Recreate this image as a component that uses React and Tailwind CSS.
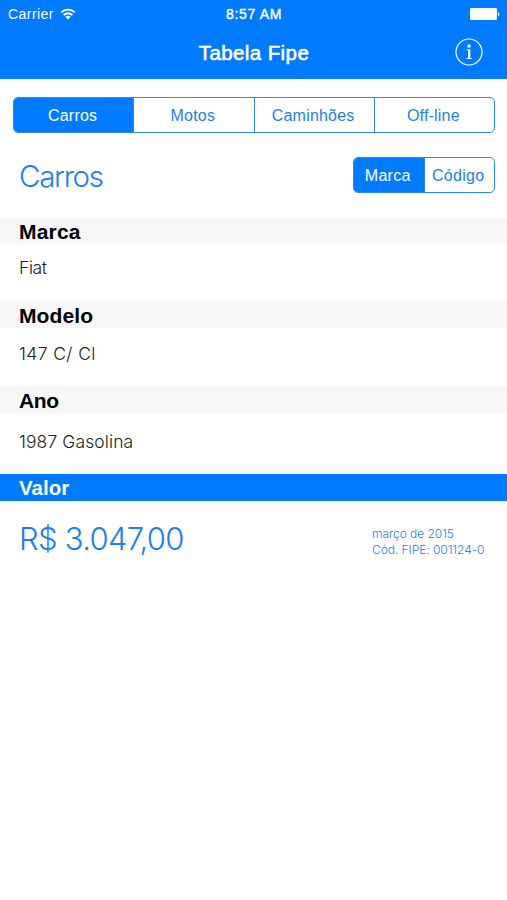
import React from 'react'

const categories = ['Carros', 'Motos', 'Caminhões', 'Off-line']

const fields = [
    {
        label: 'Marca',
        value: 'Fiat',
        band: 'h-[26px] pt-[2px] tracking-[0.2px]',
        row: 'h-14 pb-[7px] tracking-[-0.4px]',
    },
    {
        label: 'Modelo',
        value: '147 C/ Cl',
        band: 'h-7 pt-[3px] tracking-[0.1px]',
        row: 'h-[58px] pb-[6px] tracking-[0.4px]',
    },
    {
        label: 'Ano',
        value: '1987 Gasolina',
        band: 'h-[27px] pt-[2px] tracking-[-0.4px]',
        row: 'h-[61px] pb-[3px] tracking-[0.1px]',
    },
]

const WifiIcon = () => (
    <svg className="h-[12px] w-[16px]" viewBox="0 0 16 12" fill="none">
        <path
            d="M1.2 4.4C5 .7 11 .7 14.8 4.4M3.7 7.1c2.4-2.4 6.2-2.4 8.6 0"
            stroke="#fff"
            strokeWidth="1.9"
        />
        <path d="M5.3 8.8c1.5-1.4 3.9-1.4 5.4 0L8 11.5z" fill="#fff" />
    </svg>
)

const BatteryIcon = () => (
    <svg className="h-[12px] w-[30px]" viewBox="0 0 30 12" fill="#fff">
        <rect width="27" height="12" rx="1.2" />
        <path d="M28 4.2c1.9.5 1.9 3.1 0 3.6z" />
    </svg>
)

const InfoIcon = () => (
    <svg className="h-7 w-7" viewBox="0 0 28 28" fill="none">
        <circle cx="14" cy="14" r="13" stroke="#fff" strokeWidth="1.2" />
        <circle cx="14" cy="8" r="1.7" fill="#fff" />
        <path
            d="M11.6 11.3h3.7v8.8h1.5v1h-5.3v-1H13v-7.8h-1.4z"
            fill="#fff"
        />
    </svg>
)

const Segments = ({ items, active, className }) => (
    <div
        className={`flex h-9 overflow-hidden rounded-[5px] border border-[#2b87ee] text-[16px] ${className}`}
    >
        {items.map((item, i) => (
            <button
                key={item}
                className={`flex flex-1 items-center justify-center pt-[2px] pr-[2px] ${
                    i < items.length - 1 ? 'border-r border-[#2b87ee]' : ''
                } ${
                    item === active
                        ? 'bg-[#007aff] text-white'
                        : 'text-[#1b7fef]'
                }`}
            >
                {item}
            </button>
        ))}
    </div>
)

const App = () => {
    return (
        <div className="h-[900px] w-[507px] overflow-hidden bg-white font-['Liberation_Sans',Arial,sans-serif]">
            <header className="h-[79px] bg-[#007aff] text-white">
                <div className="grid h-7 grid-cols-3 items-center pr-[7px] pl-2 text-[14px]">
                    <div className="flex items-center gap-[6px] tracking-[0.45px]">
                        Carrier
                        <WifiIcon />
                    </div>
                    <div className="text-center tracking-[0.65px] [-webkit-text-stroke:0.4px_white]">
                        8:57 AM
                    </div>
                    <div className="flex justify-end">
                        <BatteryIcon />
                    </div>
                </div>
                <div className="grid h-12 grid-cols-[1fr_auto_1fr] items-center px-6">
                    <span />
                    <h1 className="pt-[3px] pl-px text-[20.5px] tracking-[0.4px] [-webkit-text-stroke:0.6px_white]">
                        Tabela Fipe
                    </h1>
                    <button className="justify-self-end">
                        <InfoIcon />
                    </button>
                </div>
            </header>

            <main>
                <Segments
                    items={categories}
                    active="Carros"
                    className="mt-[18px] mr-3 ml-[13px] tracking-[0.2px]"
                />

                <div className="mt-6 flex h-9 items-center justify-between pr-3 pl-[19px]">
                    <h2 className="pt-[2px] font-['Inter',sans-serif] text-[29.5px] font-light tracking-[-1.3px] text-[#1b7fef]">
                        Carros
                    </h2>
                    <Segments
                        items={['Marca', 'Código']}
                        active="Marca"
                        className="w-[142px] tracking-[0.3px]"
                    />
                </div>

                <div className="mt-[25px]">
                    {fields.map((field) => (
                        <section key={field.label}>
                            <h3
                                className={`flex items-center bg-[#f7f7f7] pl-[19px] text-[21px] font-bold text-black ${field.band}`}
                            >
                                {field.label}
                            </h3>
                            <p
                                className={`flex items-center pl-[19px] font-['Inter',sans-serif] text-[17.5px] font-light text-[#222] ${field.row}`}
                            >
                                {field.value}
                            </p>
                        </section>
                    ))}
                </div>

                <h3 className="flex h-[27px] items-center bg-[#007aff] pt-[2px] pl-[19px] text-[20.5px] font-bold text-white">
                    Valor
                </h3>
                <div className="flex h-[78px] items-center justify-between pl-[19px] font-['Inter',sans-serif] font-light text-[#1b7fef]">
                    <span className="pb-[2px] text-[31px] tracking-[-0.7px]">
                        R$ 3.047,00
                    </span>
                    <div className="w-[135px] pt-[3px] text-[12px] leading-4 tracking-[-0.05px]">
                        <div>março de 2015</div>
                        <div>Cód. FIPE: 001124-0</div>
                    </div>
                </div>
            </main>
        </div>
    )
}

export default App
